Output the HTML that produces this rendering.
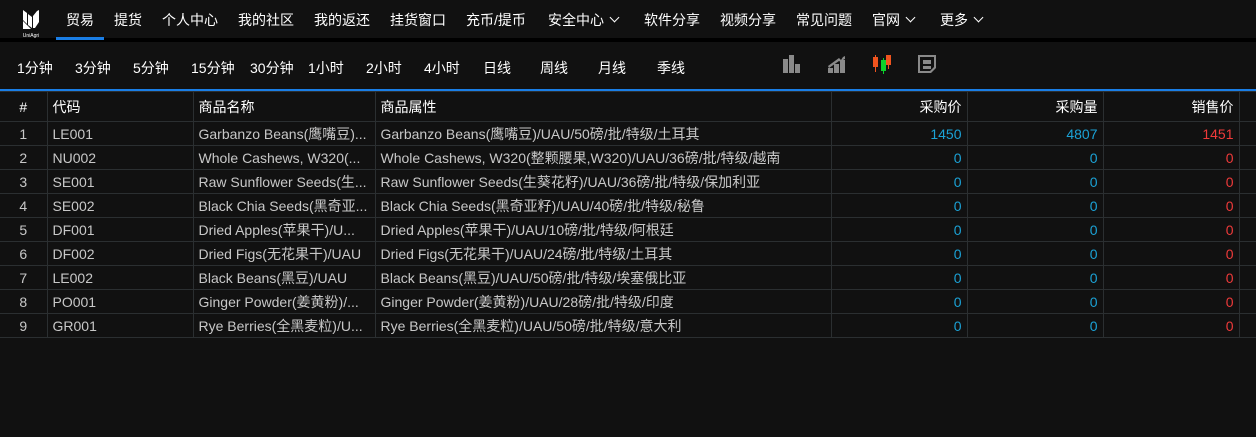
<!DOCTYPE html>
<html><head><meta charset="utf-8"><style>
*{margin:0;padding:0;box-sizing:border-box}
body{width:1256px;height:437px;background:#111;font-family:"Liberation Sans","Noto Sans CJK SC",sans-serif;color:#c8c8c8;position:relative;overflow:hidden;font-size:14px}
.nav{position:absolute;left:0;top:0;width:1256px;height:42px;background:#111;border-bottom:4px solid #000}
.nav span{position:absolute;top:10px;color:#fff;font-size:14px;white-space:nowrap}
.nav i{display:inline-block;width:7px;height:7px;border-right:1.5px solid #fff;border-bottom:1.5px solid #fff;transform:rotate(45deg);margin-left:7px;position:relative;top:-4px}
.ul{position:absolute;left:56px;top:37px;width:48px;height:3px;background:#1a7ee6}
.tb span{position:absolute;top:58px;color:#fff;font-size:14px;white-space:nowrap}
.blue{position:absolute;left:0;top:89px;width:1256px;height:2px;background:#1a7ee6}
table{position:absolute;left:0;top:91px;border-collapse:collapse;table-layout:fixed;width:1256px}
td,th{border:1px solid #2b2f31;height:24px;padding:0 5px;white-space:nowrap;overflow:hidden;font-size:14px;font-weight:normal}
th{height:30px;color:#fff;text-align:left}
tr td:first-child,tr th:first-child{text-align:center;border-left:none}
.r{text-align:right}
.c{color:#1ba2d6}.d{color:#ef3a3a}
</style></head><body>
<div class="nav">
<svg style="position:absolute;left:19px;top:8px" width="24" height="30" viewBox="0 0 24 30"><path d="M4 2 L8 5 L8 16 L4 12Z M9 6 L13 9 L13 20 L9 17Z M14 8 L18 3 L20 2 L20 14 L16 20 L14 20Z M4 13 L12 21 L4 21Z" fill="#fff"/><text x="12" y="29" font-size="5" fill="#fff" text-anchor="middle" font-family="Liberation Sans">UniAgri</text></svg>
<span style="left:66px">贸易</span><span style="left:114px">提货</span><span style="left:162px">个人中心</span><span style="left:238px">我的社区</span><span style="left:314px">我的返还</span><span style="left:390px">挂货窗口</span><span style="left:466px">充币/提币</span><span style="left:548px">安全中心<i></i></span><span style="left:644px">软件分享</span><span style="left:720px">视频分享</span><span style="left:796px">常见问题</span><span style="left:872px">官网<i></i></span><span style="left:940px">更多<i></i></span>
<div class="ul"></div>
</div>
<div class="tb">
<span style="left:17px">1分钟</span><span style="left:75px">3分钟</span><span style="left:133px">5分钟</span><span style="left:191px">15分钟</span><span style="left:250px">30分钟</span><span style="left:308px">1小时</span><span style="left:366px">2小时</span><span style="left:424px">4小时</span><span style="left:483px">日线</span><span style="left:540px">周线</span><span style="left:598px">月线</span><span style="left:657px">季线</span>
</div>
<svg style="position:absolute;left:783px;top:55px" width="160" height="20" viewBox="0 0 160 20">
<g fill="#8a8a8a"><rect x="0" y="4" width="5" height="14"/><rect x="6" y="0" width="5" height="18"/><rect x="12" y="9" width="5" height="9"/>
<rect x="45" y="13" width="5" height="5"/><rect x="51" y="9" width="5" height="9"/><rect x="57" y="5" width="5" height="13"/><path d="M45 11 L56 3 L58 5 L60 2 L62 1 L62 4 L60 5 L58 7 L56 6 L46 13Z"/></g>
<rect x="90" y="2" width="5" height="10" fill="#f0541e"/><rect x="92" y="0" width="1" height="17" fill="#f0541e"/><rect x="98" y="5" width="5" height="11" fill="#0bd12b"/><rect x="100" y="3" width="1" height="16" fill="#0bd12b"/><rect x="103" y="0" width="5" height="10" fill="#f0541e"/><rect x="105" y="0" width="1" height="14" fill="#f0541e"/>
<path d="M135 0 H153 V13 L148 18 H135Z M137 2 V16 H147 L151 12 V2Z M140 5 H148 V9 H140Z M140 11 H148 V14 H140Z" fill="#8a8a8a" fill-rule="evenodd"/>
</svg>
<div class="blue"></div>
<table>
<colgroup><col style="width:47px"><col style="width:146px"><col style="width:182px"><col style="width:456px"><col style="width:136px"><col style="width:136px"><col style="width:136px"><col style="width:17px"></colgroup>
<tr><th>#</th><th>代码</th><th>商品名称</th><th>商品属性</th><th class="r">采购价</th><th class="r">采购量</th><th class="r">销售价</th><th></th></tr>
<tr><td>1</td><td>LE001</td><td>Garbanzo Beans(鹰嘴豆)...</td><td>Garbanzo Beans(鹰嘴豆)/UAU/50磅/批/特级/土耳其</td><td class="r c">1450</td><td class="r c">4807</td><td class="r d">1451</td><td></td></tr>
<tr><td>2</td><td>NU002</td><td>Whole Cashews, W320(...</td><td>Whole Cashews, W320(整颗腰果,W320)/UAU/36磅/批/特级/越南</td><td class="r c">0</td><td class="r c">0</td><td class="r d">0</td><td></td></tr>
<tr><td>3</td><td>SE001</td><td>Raw Sunflower Seeds(生...</td><td>Raw Sunflower Seeds(生葵花籽)/UAU/36磅/批/特级/保加利亚</td><td class="r c">0</td><td class="r c">0</td><td class="r d">0</td><td></td></tr>
<tr><td>4</td><td>SE002</td><td>Black Chia Seeds(黑奇亚...</td><td>Black Chia Seeds(黑奇亚籽)/UAU/40磅/批/特级/秘鲁</td><td class="r c">0</td><td class="r c">0</td><td class="r d">0</td><td></td></tr>
<tr><td>5</td><td>DF001</td><td>Dried Apples(苹果干)/U...</td><td>Dried Apples(苹果干)/UAU/10磅/批/特级/阿根廷</td><td class="r c">0</td><td class="r c">0</td><td class="r d">0</td><td></td></tr>
<tr><td>6</td><td>DF002</td><td>Dried Figs(无花果干)/UAU</td><td>Dried Figs(无花果干)/UAU/24磅/批/特级/土耳其</td><td class="r c">0</td><td class="r c">0</td><td class="r d">0</td><td></td></tr>
<tr><td>7</td><td>LE002</td><td>Black Beans(黑豆)/UAU</td><td>Black Beans(黑豆)/UAU/50磅/批/特级/埃塞俄比亚</td><td class="r c">0</td><td class="r c">0</td><td class="r d">0</td><td></td></tr>
<tr><td>8</td><td>PO001</td><td>Ginger Powder(姜黄粉)/...</td><td>Ginger Powder(姜黄粉)/UAU/28磅/批/特级/印度</td><td class="r c">0</td><td class="r c">0</td><td class="r d">0</td><td></td></tr>
<tr><td>9</td><td>GR001</td><td>Rye Berries(全黑麦粒)/U...</td><td>Rye Berries(全黑麦粒)/UAU/50磅/批/特级/意大利</td><td class="r c">0</td><td class="r c">0</td><td class="r d">0</td><td></td></tr>
</table>
</body></html>
